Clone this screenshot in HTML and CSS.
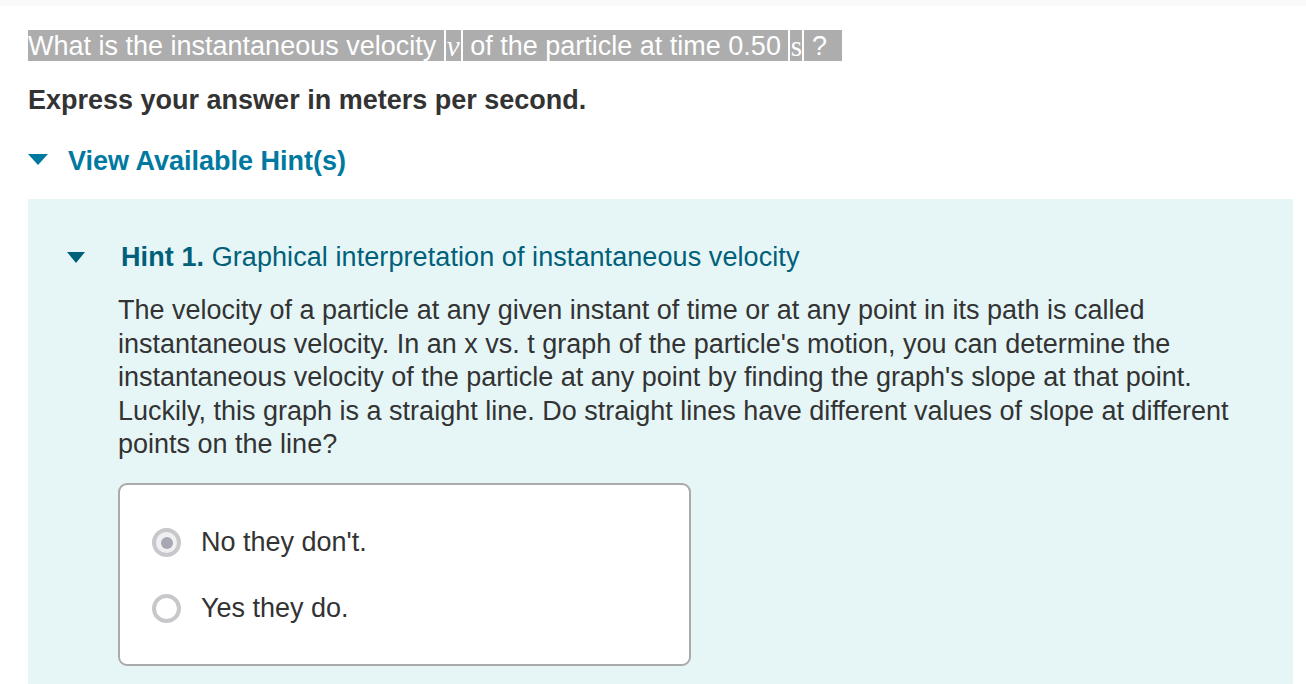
FILE: index.html
```html
<!DOCTYPE html>
<html>
<head>
<meta charset="utf-8">
<link rel="stylesheet" href="styles.css">
</head>
<body>
<div class="topbar"></div>
<div class="main">
  <div class="question">
    <span class="sel">What is the instantaneous velocity </span><span class="sel math"><i>v</i></span><span class="sel"> of the particle at time 0.50 </span><span class="sel unit">s</span><span class="sel"> ?  </span>
  </div>
  <p class="express">Express your answer in meters per second.</p>
  <div class="hints-toggle"><span class="tri tri-blue"></span><span>View Available Hint(s)</span></div>
  <div class="hintbox">
    <div class="hint-head"><span class="tri tri-dark"></span><span class="hint-title"><b>Hint 1.</b> Graphical interpretation of instantaneous velocity</span></div>
    <div class="hint-body">
      <p class="hint-text">The velocity of a particle at any given instant of time or at any point in its path is called instantaneous velocity. In an x vs. t graph of the particle's motion, you can determine the instantaneous velocity of the particle at any point by finding the graph's slope at that point. Luckily, this graph is a straight line. Do straight lines have different values of slope at different points on the line?</p>
      <div class="answers">
        <div class="opt"><span class="radio checked"></span><span>No they don't.</span></div>
        <div class="opt"><span class="radio"></span><span>Yes they do.</span></div>
      </div>
    </div>
  </div>
</div>
</body>
</html>
```
FILE: styles.css
```css
html, body {
  margin: 0;
  padding: 0;
  background: #fff;
}
body {
  font-family: "Liberation Sans", Arial, sans-serif;
  color: #333;
  font-size: 27px;
}
.topbar {
  height: 6px;
  background: #f9f9f9;
}
.main {
  padding: 0 13px 0 28px;
}
.question {
  display: flex;
  gap: 2px;
  margin-top: 24px;
  height: 31px;
}
.sel {
  display: inline-block;
  white-space: pre;
  background: #adadad;
  color: #fff;
  height: 31px;
  line-height: 33px;
  overflow: hidden;
  font-size: 27px;
}
.math {
  font-family: "Liberation Serif", "DejaVu Serif", serif;
  font-size: 29px;
  width: 15px;
  text-align: center;
}
.unit {
  font-family: "Liberation Serif", serif;
  font-size: 29px;
  width: 12px;
  text-align: center;
}
.express {
  margin: 22px 0 0;
  font-weight: bold;
  line-height: 34px;
}
.hints-toggle {
  margin-top: 27px;
  display: flex;
  align-items: center;
  gap: 20px;
  height: 34px;
  color: #0079a0;
  font-weight: bold;
}
.tri {
  display: inline-block;
  width: 0;
  height: 0;
  border-left: 10px solid transparent;
  border-right: 10px solid transparent;
  border-top: 11px solid #0079a0;
}
.tri-blue {
  margin-top: -4px;
}
.tri-dark {
  border-left-width: 9.5px;
  border-right-width: 9.5px;
  border-top-color: #005f7a;
}
.hintbox {
  margin-top: 21px;
  background: #e6f6f7;
  padding: 41px 30px 18px 39px;
}
.hint-head {
  display: flex;
  align-items: center;
  gap: 36px;
  height: 34px;
  color: #00607a;
}
.hint-title {
  letter-spacing: 0.08px;
}
.hint-body {
  padding-left: 51px;
}
.hint-text {
  margin: 20px 0 0;
  line-height: 33.6px;
  color: #333;
}
.answers {
  margin-top: 21px;
  width: 573px;
  box-sizing: border-box;
  border: 2px solid #aaa;
  border-radius: 9px;
  background: #fff;
  padding: 40px 32px 37px;
  display: flex;
  flex-direction: column;
  gap: 30px;
}
.opt {
  display: flex;
  align-items: center;
  gap: 20px;
  height: 36px;
}
.radio {
  width: 29px;
  height: 29px;
  box-sizing: border-box;
  border: 4px solid #c8c8cc;
  border-radius: 50%;
  background: #fff;
  display: flex;
  align-items: center;
  justify-content: center;
}
.radio.checked {
  background: #f0f0f2;
}
.radio.checked::after {
  content: "";
  width: 12px;
  height: 12px;
  border-radius: 50%;
  background: #a8a8b4;
}
```
